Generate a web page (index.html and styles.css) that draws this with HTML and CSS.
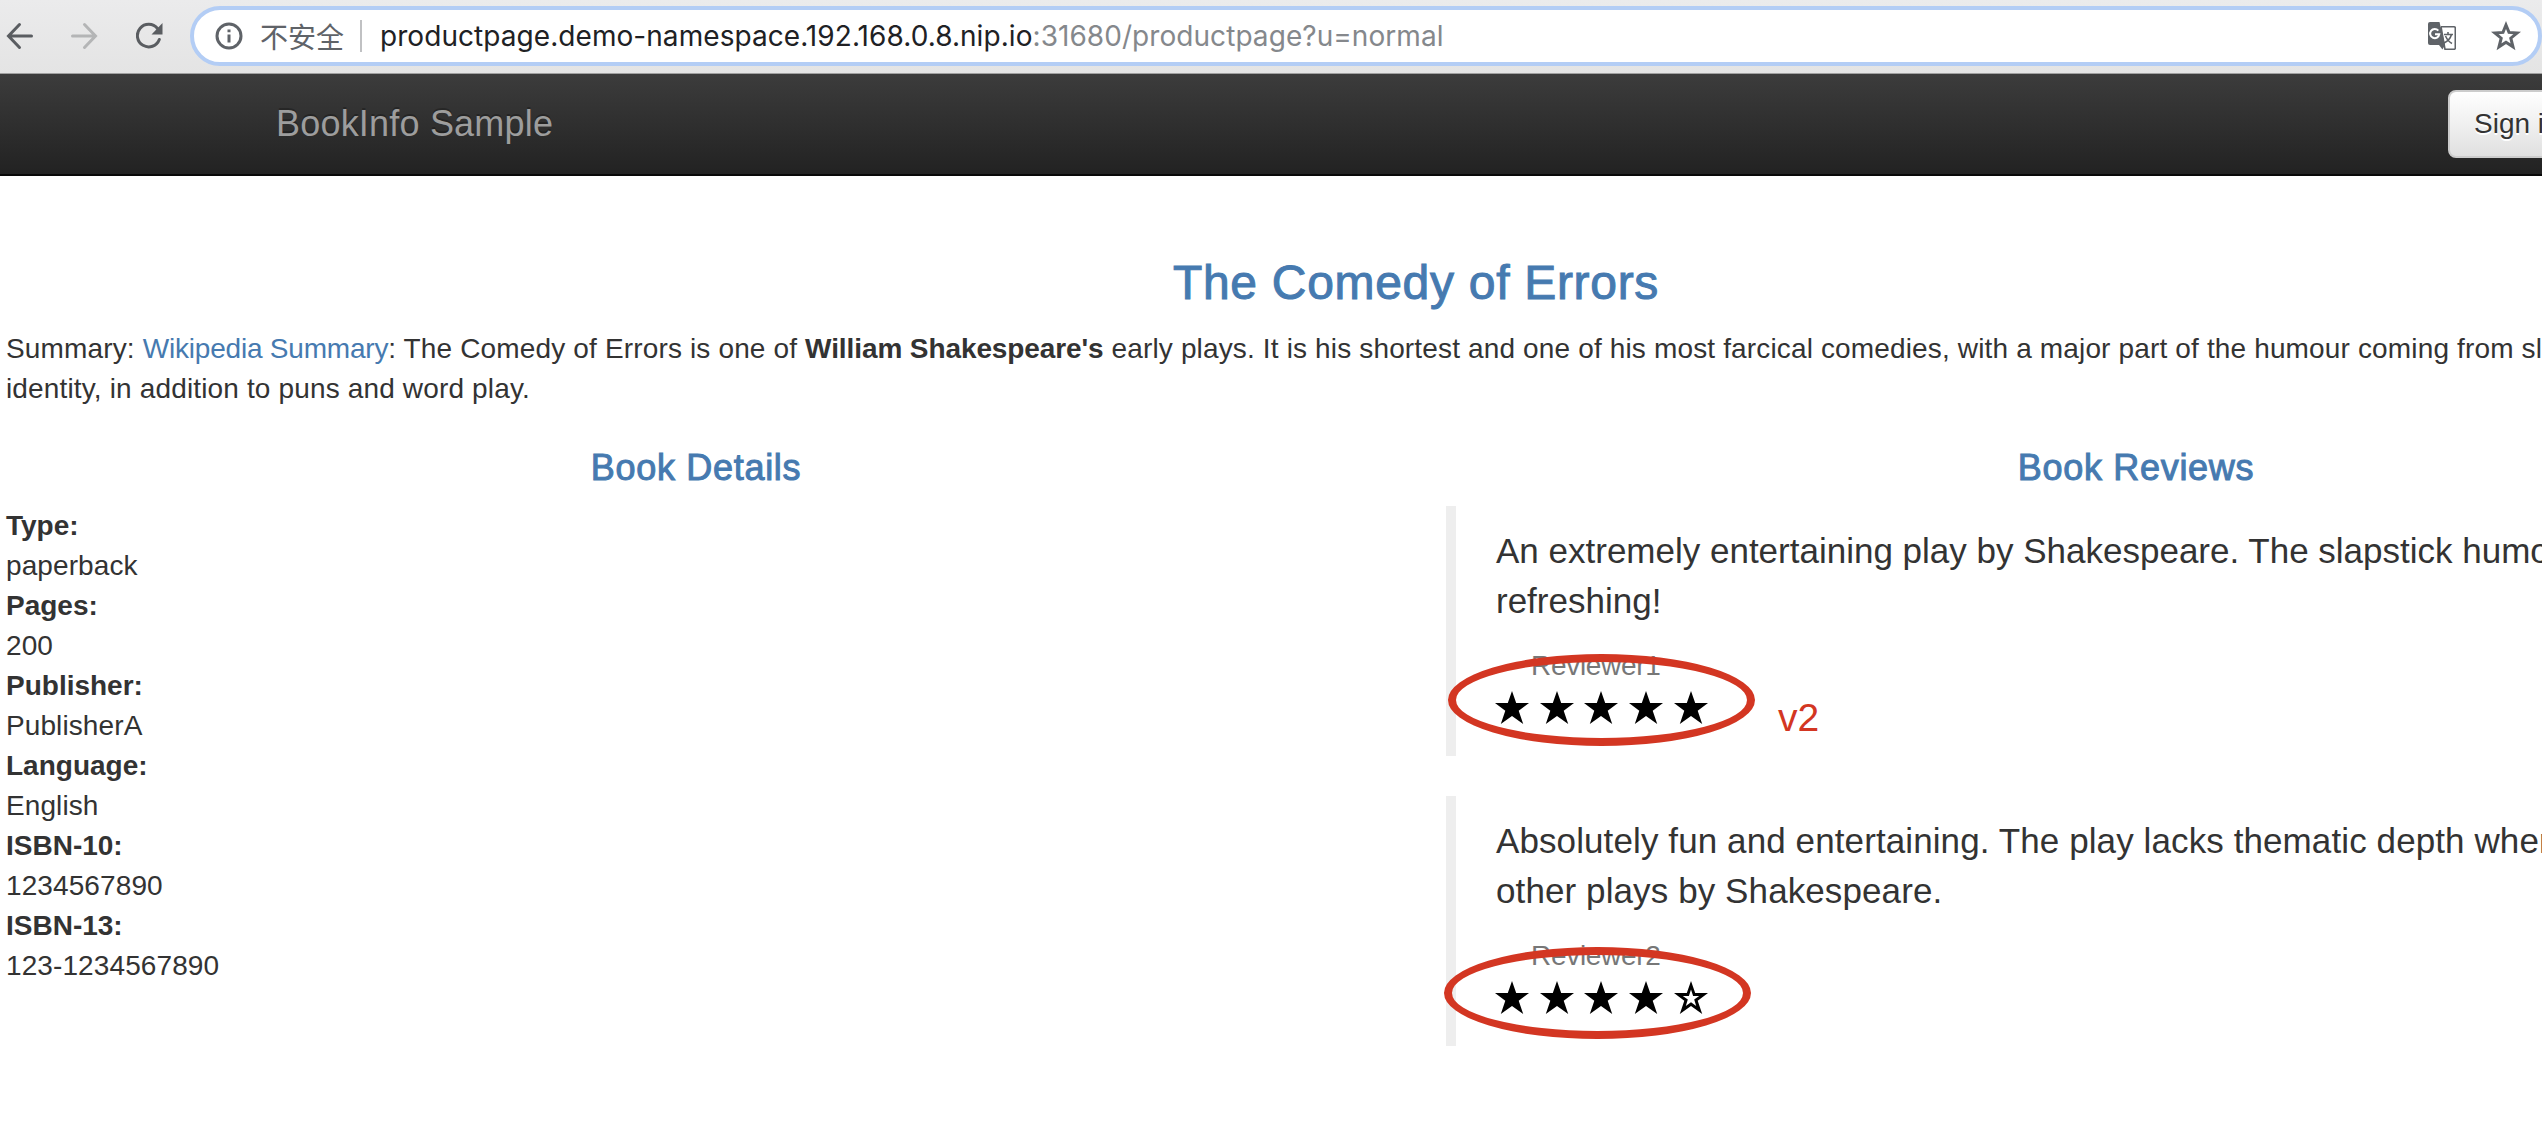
FILE: index.html
```
<!DOCTYPE html>
<html lang="en">
<head>
  <meta charset="UTF-8">
  <title>Simple Bookstore App</title>
  <link rel="stylesheet" href="styles.css">
</head>
<body>

  <!-- browser toolbar -->
  <div class="toolbar">
    <svg class="tool-icon" width="28" height="28" viewBox="0 0 28 28">
      <path d="M25.5 14H3M13.5 2.5L2.5 14L13.5 25.5"/>
    </svg>
    <svg class="tool-icon disabled" width="28" height="28" viewBox="0 0 28 28">
      <path d="M1.5 14H24M13.5 2.5L24.5 14L13.5 25.5"/>
    </svg>
    <svg class="tool-icon reload" width="28" height="28" viewBox="0 0 28 28">
      <path d="M21.5 6.5A11.3 11.3 0 1 0 23.3 17.5"/>
      <path class="solid" d="M26.5 1V12.5H15.5Z"/>
    </svg>

    <div class="omnibox">
      <svg class="info-icon" width="28" height="28" viewBox="0 0 28 28">
        <circle cx="14" cy="14" r="12"/>
        <path d="M14 12.5V20.5M14 7.5V10.2"/>
      </svg>
      <span class="insecure">不安全</span>
      <span class="divider"></span>
      <span class="url">productpage.demo-namespace.192.168.0.8.nip.io<span class="path">:31680/productpage?u=normal</span></span>
      <svg class="translate-icon" width="28" height="28" viewBox="0 0 28 28">
        <path class="back" d="M13 4.7H26Q27.3 4.7 27.3 6V26Q27.3 27.3 26 27.3H17L13 4.7"/>
        <path class="back" d="M16 12.5H25M20 10V12.5M23.5 12.5Q22 18 16 21M17.5 14Q20 19.5 24 21.5"/>
        <path class="front" d="M2 0H11.5L17 23H2Q0 23 0 21V2Q0 0 2 0Z"/>
        <path class="front" d="M11 23H17L14.5 27.5Z"/>
        <path class="letter" d="M10.3 8.6A4.6 4.6 0 1 0 11.3 12.2H7"/>
      </svg>
      <svg class="bookmark-icon" width="30" height="30" viewBox="0 0 30 30">
        <path d="M15 4L18 11.4L26.2 12L19.8 17.2L22 25.8L15 21.2L8 25.8L10.2 17.2L3.8 12L12 11.4Z"/>
      </svg>
    </div>
  </div>

  <div class="page">
    <nav class="navbar">
      <a class="navbar-brand" href="#">BookInfo Sample</a>
      <button type="button" class="btn">Sign in</button>
    </nav>

    <div class="container">
      <h3>The Comedy of Errors</h3>
      <p class="summary">Summary: <a href="#">Wikipedia Summary</a>: The Comedy of Errors is one of <b>William Shakespeare's</b> early plays. It is his shortest and one of his most farcical comedies, with a major part of the humour coming from slapstick and mistaken identity, in addition to puns and word play.</p>
    </div>

    <div class="row">
      <div class="col">
        <h4>Book Details</h4>
        <dl>
          <dt>Type:</dt>
          <dd>paperback</dd>
          <dt>Pages:</dt>
          <dd>200</dd>
          <dt>Publisher:</dt>
          <dd>PublisherA</dd>
          <dt>Language:</dt>
          <dd>English</dd>
          <dt>ISBN-10:</dt>
          <dd>1234567890</dd>
          <dt>ISBN-13:</dt>
          <dd>123-1234567890</dd>
        </dl>
      </div>

      <div class="col">
        <h4>Book Reviews</h4>
        <blockquote>
          <p>An extremely entertaining play by Shakespeare. The slapstick humour is refreshing!</p>
          <small>Reviewer1</small>
          <div class="stars">
            <svg viewBox="0 0 34 32"><use href="#star"/></svg>
            <svg viewBox="0 0 34 32"><use href="#star"/></svg>
            <svg viewBox="0 0 34 32"><use href="#star"/></svg>
            <svg viewBox="0 0 34 32"><use href="#star"/></svg>
            <svg viewBox="0 0 34 32"><use href="#star"/></svg>
          </div>
          <span class="mark"></span>
          <span class="version">v2</span>
        </blockquote>
        <blockquote>
          <p class="wide">Absolutely fun and entertaining. The play lacks thematic depth when compared to other plays by Shakespeare.</p>
          <small>Reviewer2</small>
          <div class="stars">
            <svg viewBox="0 0 34 32"><use href="#star"/></svg>
            <svg viewBox="0 0 34 32"><use href="#star"/></svg>
            <svg viewBox="0 0 34 32"><use href="#star"/></svg>
            <svg viewBox="0 0 34 32"><use href="#star"/></svg>
            <svg viewBox="0 0 34 32"><use href="#star-empty"/></svg>
          </div>
          <span class="mark mark-second"></span>
        </blockquote>
      </div>
    </div>
  </div>

  <svg class="defs" width="0" height="0">
    <defs>
      <path id="star" d="M17 0L21.2 12H34L23.7 19.7L28.2 33L17 25L5.8 33L10.3 19.7L0 12H12.8Z"/>
      <path id="star-empty" fill-rule="evenodd" d="M17 0L21.2 12H34L23.7 19.7L28.2 33L17 25L5.8 33L10.3 19.7L0 12H12.8ZM17 8.5L14.9 15H8.8L13.8 18.5L11.8 25L17 21.2L22.2 25L20.2 18.5L25.2 15H19.1Z"/>
    </defs>
  </svg>

</body>
</html>
```
FILE: styles.css
```
* {
  box-sizing: border-box;
}

body {
  margin: 0;
  font-family: "Helvetica Neue", "Liberation Sans", Arial, sans-serif;
  font-size: 28px;
  line-height: 40px;
  color: #333;
  background-color: #fff;
  overflow: hidden;
}

a {
  color: #467ab0;
  text-decoration: none;
}

/* Toolbar */
.toolbar {
  display: flex;
  align-items: center;
  height: 74px;
  padding: 0 0 2px 6px;
  border-bottom: 1px solid #a0a0a0;
  background: linear-gradient(#ebebec, #e4e4e4);
}

.tool-icon {
  flex: none;
  margin-right: 37px;
  fill: none;
  stroke: #5a5d61;
  stroke-width: 3;
  stroke-linecap: round;
}

.tool-icon.disabled {
  stroke: #b4b5b6;
}

.tool-icon.reload {
  margin-right: 26px;
}

.tool-icon .solid {
  fill: #5a5d61;
  stroke: none;
}

.omnibox {
  flex: 1;
  display: flex;
  align-items: center;
  height: 60px;
  padding: 0 17px 0 21px;
  border: 4px solid #b3cdf5;
  border-radius: 30px;
  background-color: #fff;
}

.info-icon {
  fill: none;
  stroke: #5f6368;
  stroke-width: 3;
}

.insecure {
  margin-left: 17px;
  font-family: "Noto Sans CJK SC", sans-serif;
  color: #5f6368;
}

.divider {
  width: 2px;
  height: 32px;
  margin: 0 18px 0 16px;
  background-color: #c0c1c3;
}

.url {
  flex: 1;
  font-family: Inter, sans-serif;
  letter-spacing: 0.06px;
  color: #202124;
}

.url .path {
  color: #85888c;
}

.translate-icon .front {
  fill: #5f6368;
}

.translate-icon .back {
  fill: none;
  stroke: #5f6368;
  stroke-width: 1.6;
}

.translate-icon .letter {
  fill: none;
  stroke: #fff;
  stroke-width: 2;
}

.bookmark-icon {
  margin-left: 35px;
  fill: none;
  stroke: #5f6368;
  stroke-width: 3;
}

/* Page is wider than the window on both sides */
.page {
  width: 2880px;
  margin-left: -24px;
}

.navbar {
  display: flex;
  align-items: center;
  height: 102px;
  padding: 0 30px 0 300px;
  border-bottom: 2px solid #080808;
  background: linear-gradient(#3c3c3c, #222);
}

.navbar-brand {
  width: 2172px;
  font-size: 36px;
  letter-spacing: 0.2px;
  color: #9d9d9d;
  text-shadow: 0 -2px 0 rgba(0, 0, 0, 0.25);
}

.btn {
  height: 68px;
  padding: 0 24px;
  border: 2px solid #ccc;
  border-radius: 8px;
  background: linear-gradient(#fff, #e0e0e0);
  font: inherit;
  color: #333;
  text-shadow: 0 2px 0 #fff;
}

.container {
  padding: 81px 30px 0;
}

h3,
h4 {
  margin: 0 0 19px;
  font-weight: normal;
  line-height: 1.1;
  letter-spacing: 0.7px;
  text-align: center;
  color: #467ab0;
  -webkit-text-stroke: 1px #467ab0;
}

h3 {
  font-size: 48px;
}

h4 {
  font-size: 36px;
}

.summary {
  margin: 0 0 39px;
  letter-spacing: 0.15px;
}

.summary a {
  letter-spacing: -0.2px;
}

.summary b {
  letter-spacing: -0.1px;
}

.row {
  display: flex;
}

.col {
  width: 50%;
  padding: 0 30px;
}

dl,
dd {
  margin: 0;
}

dt {
  font-weight: bold;
}

dd {
  letter-spacing: 0.1px;
}

blockquote {
  position: relative;
  height: 250px;
  margin: 0 0 40px;
  padding: 20px 40px;
  border-left: 10px solid #eee;
  font-size: 35px;
  line-height: 50px;
}

blockquote p {
  margin: 0 0 20px;
}

blockquote p.wide {
  letter-spacing: 0.1px;
}

blockquote small {
  display: block;
  padding-left: 35px;
  font-size: 28px;
  line-height: 40px;
  letter-spacing: -0.3px;
  color: #777;
}

.stars {
  display: flex;
  gap: 10.7px;
  padding-top: 5px;
  margin-left: -1px;
}

.stars svg {
  width: 34px;
  height: 32px;
  overflow: visible;
  fill: #000;
}

/* Hand-drawn marks over the ratings */
.mark {
  position: absolute;
  left: -8px;
  top: 148px;
  width: 307px;
  height: 92px;
  border: 8px solid #d33622;
  border-radius: 50%;
}

.mark-second {
  left: -12px;
  top: 151px;
}

.version {
  position: absolute;
  left: 322px;
  top: 187px;
  font-size: 39px;
  color: #d33622;
}

.defs {
  position: absolute;
}
```
